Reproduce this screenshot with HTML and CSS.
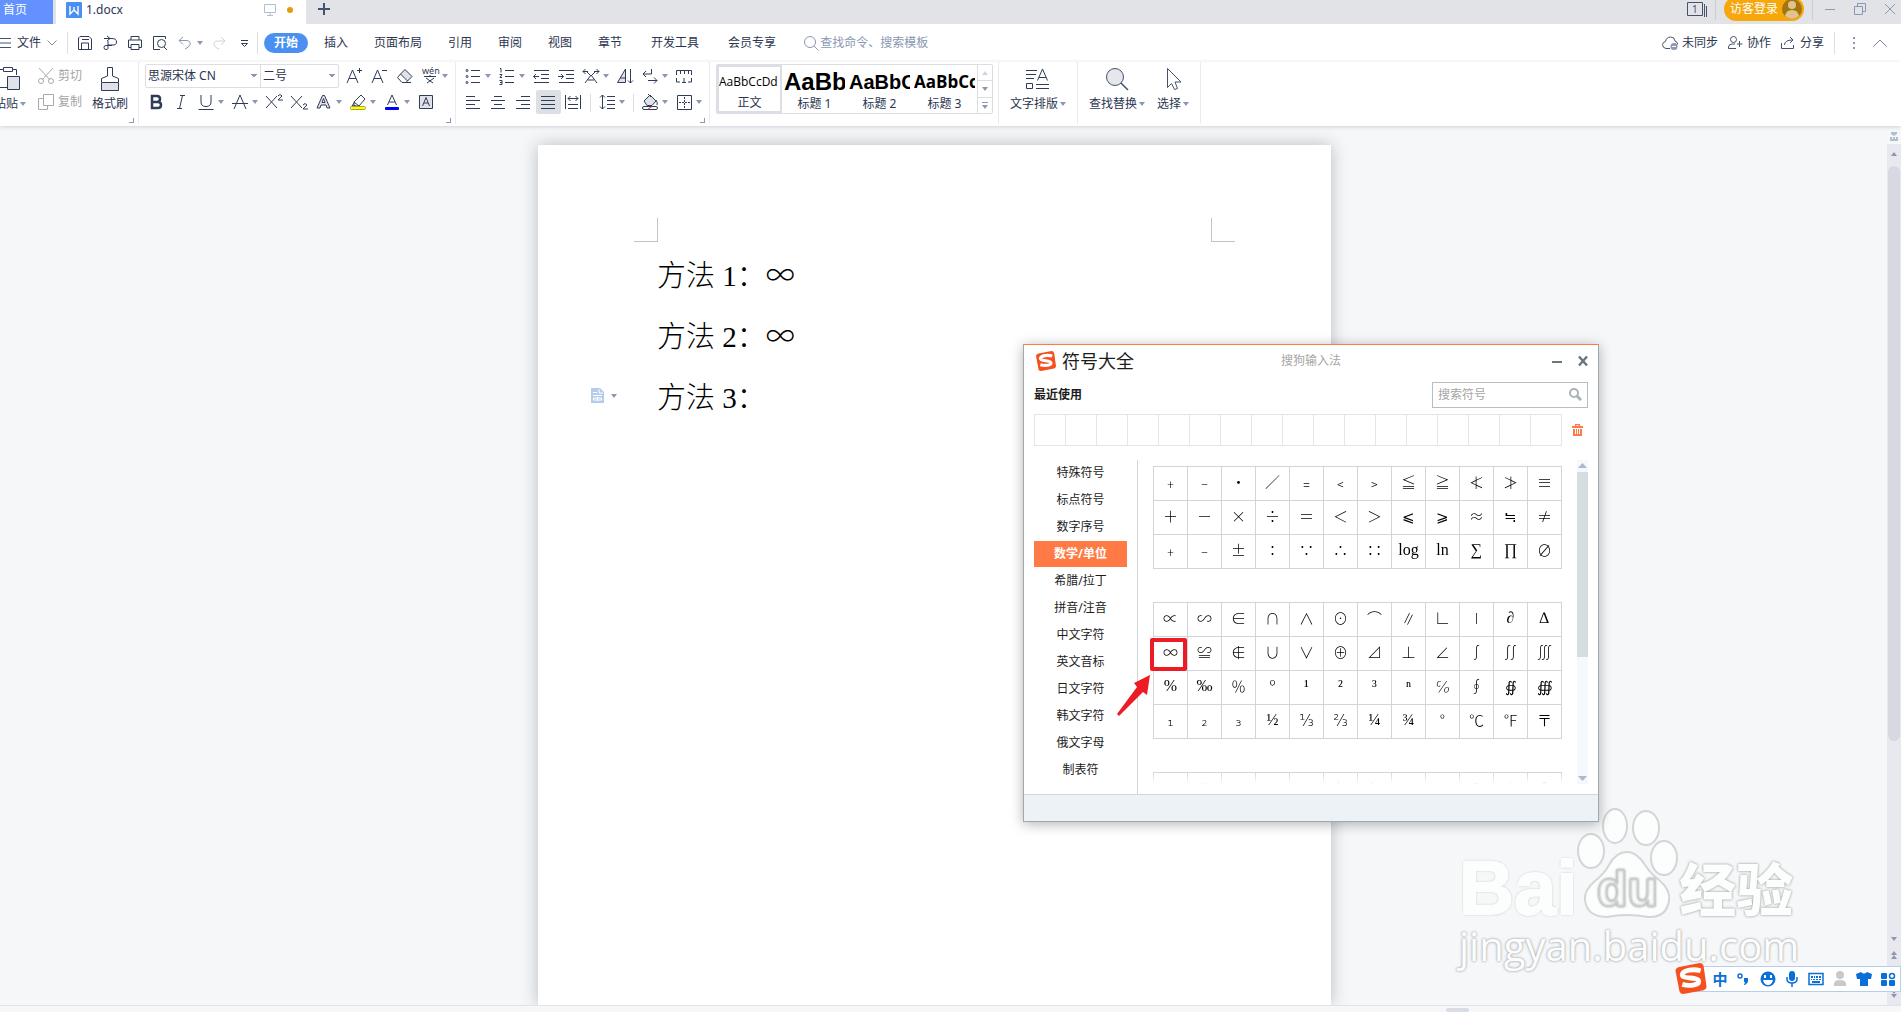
FILE: index.html
```html
<!DOCTYPE html>
<html lang="zh-CN">
<head>
  <meta charset="UTF-8">
  <meta name="viewport" content="width=device-width, initial-scale=1.0">
  <title>1.docx</title>
  <link rel="stylesheet" href="styles.css">
</head>
<body>
  <svg class="defs" width="0" height="0">
    <symbol id="caret" viewBox="0 0 6 4"><path d="M0 0h6L3 4z" fill="#8b97b3"/></symbol>
    <symbol id="sogou" viewBox="0 0 32 32">
      <path d="M4 4l21-4q3 0 4 3l3 21q0 3-3 4L8 32q-3 0-4-3L0 8q0-3 4-4z" fill="#f4511e"/>
      <path d="M26 8C19 6 8 7 7 12c0 5 17 2 17 7 0 4-10 5-17 3" fill="none" stroke="#fff" stroke-width="5"/>
    </symbol>
  </svg>

  <!-- Tabs -->
  <header class="tab-bar">
    <button class="home-tab">首页</button>
    <div class="doc-tab">
      <svg width="16" height="16" viewBox="0 0 16 16"><rect width="16" height="16" rx="1" fill="#4a90f2"/><path d="M4 4v8l4-4 4 4V4M8 8V5" fill="none" stroke="#fff" stroke-width="1.4"/></svg>
      <span>1.docx</span>
      <svg class="screen" width="12" height="12" viewBox="0 0 12 12"><path d="M.5.5h11v8H.5zM6 9v2M3 11.500h6" fill="none" stroke="#b4bccf"/></svg>
      <i class="unsaved"></i>
    </div>
    <button class="new-tab" aria-label="新建"><svg width="12" height="12" viewBox="0 0 12 12"><path d="M6 0v12M0 6h12" stroke="#45526e" stroke-width="2"/></svg></button>
    <div class="window-tools">
      <svg width="20" height="15" viewBox="0 0 20 15"><path d="M.5.5h15v13H.5zM17.500 2v13M19.500 4v11" fill="none" stroke="#45526e"/><text x="5" y="11" font-size="10" fill="#45526e">1</text></svg>
      <i class="line"></i>
      <button class="login">访客登录
        <svg width="20" height="20" viewBox="0 0 20 20"><circle cx="10" cy="10" r="10" fill="#a4750f"/><circle cx="10" cy="6" r="4" fill="#dfc48f"/><path d="M3 17q1-6 7-6t7 6q-7 6-14 0z" fill="#dfc48f"/></svg>
      </button>
      <i class="line"></i>
      <button class="win-btn" aria-label="最小化"><svg width="12" height="12" viewBox="0 0 12 12"><path d="M1 6.500h10" stroke="#8b97b3"/></svg></button>
      <button class="win-btn" aria-label="还原"><svg width="12" height="12" viewBox="0 0 12 12"><path d="M.5 3.500h8v8h-8zM3.500 3V.5h8v8H9" fill="none" stroke="#8b97b3"/></svg></button>
      <button class="win-btn" aria-label="关闭"><svg width="12" height="12" viewBox="0 0 12 12"><path d="M1 1l10 10M11 1L1 11" stroke="#8b97b3"/></svg></button>
    </div>
  </header>

  <!-- Menu -->
  <nav class="menu-bar">
    <button class="file-menu">
      <svg width="11" height="10" viewBox="0 0 11 10"><path d="M0 .5h11M0 5h11M0 9.500h11" stroke="#45526e"/></svg>
      文件
      <svg width="10" height="6" viewBox="0 0 10 6"><path d="M.5.5L5 5 9.500.5" fill="none" stroke="#8b8b8b"/></svg>
    </button>
    <i class="line"></i>
    <div class="quick">
      <button class="tool" aria-label="保存"><svg viewBox="0 0 24 24"><path d="M7 5.500h9l2.500 2.500v10.500h-13V7zM8.500 18v-6h7v6M9 8.500h7"/></svg></button>
      <button class="tool" aria-label="输出"><svg viewBox="0 0 24 24"><path d="M6 7.500h8q4.500 0 4.500 3.500t-4.500 3h-4M9 5l3 2.500L9 10M10 10v7.500q0 1-2 1t-2-2 2-2h6"/></svg></button>
      <button class="tool" aria-label="打印"><svg viewBox="0 0 24 24"><path d="M8 9V5.500h8V9M8 16.500H5.500V9h13v7.500H16M8 13.500h8v5H8z"/></svg></button>
      <button class="tool" aria-label="预览"><svg viewBox="0 0 24 24"><path d="M17.500 8V5.500h-12v13H12M16 16l3 3"/><circle cx="13.500" cy="12.500" r="4"/></svg></button>
      <button class="tool drop soft" aria-label="撤销"><svg viewBox="0 0 24 24"><path d="M10 6L6 9.500l4 4M6 9.500h7q5 0 4 4-1 3-5 4.500"/></svg><svg class="caret"><use href="#caret"/></svg></button>
      <button class="tool faint" aria-label="恢复"><svg viewBox="0 0 24 24"><path d="M14 6l4 4-4 4M18 10h-7q-5 0-4 4 1 3 5 4"/></svg></button>
      <button class="tool" aria-label="更多"><svg viewBox="0 0 24 24"><path d="M9 9.500h7M9.500 12.500l3 3 3-3z"/></svg></button>
    </div>
    <i class="line"></i>
    <a class="current" href="#">开始</a>
    <div class="links">
      <a href="#">插入</a><a href="#">页面布局</a><a href="#">引用</a><a href="#">审阅</a><a href="#">视图</a><a href="#">章节</a>
    </div>
    <div class="links more">
      <a href="#">开发工具</a><a href="#">会员专享</a>
    </div>
    <label class="command">
      <svg width="15" height="15" viewBox="0 0 15 15"><circle cx="6" cy="6" r="5.500" fill="none" stroke="#8b97b3"/><path d="M10 10l4.500 4.500" stroke="#8b97b3"/></svg>
      <input type="text" placeholder="查找命令、搜索模板" aria-label="查找命令">
    </label>
    <div class="share">
      <button><svg width="16" height="14" viewBox="0 0 16 14"><path d="M8 12.500H4q-3.500-.5-3.500-4Q1 6 3.500 5.500 4.500 1 8.500 1q4 0 4.500 4 3 1 2.500 3.500" fill="none" stroke="#45526e"/><circle cx="12" cy="10.500" r="3.500" fill="#8b97b3"/><path d="M10 10.500h4" stroke="#fff"/></svg>未同步</button>
      <button><svg width="15" height="14" viewBox="0 0 15 14"><circle cx="5.500" cy="3.500" r="3" fill="none" stroke="#45526e"/><path d="M8 12.500H.5V11q0-3 4-3H7M9 8h5.500M11.500 5v6" fill="none" stroke="#45526e"/></svg>协作</button>
      <button><svg width="15" height="14" viewBox="0 0 15 14"><path d="M.5 7v5.500h12V9M3.500 9q0-5 8-5M9 1l3 3-3 3" fill="none" stroke="#45526e"/></svg>分享</button>
      <i class="line"></i>
      <button aria-label="更多"><svg width="2" height="12" viewBox="0 0 2 12"><path d="M0 0h2v2H0zM0 5h2v2H0zM0 10h2v2H0z" fill="#8b97b3"/></svg></button>
      <button aria-label="折叠"><svg width="14" height="8" viewBox="0 0 14 8"><path d="M.5 7.500L7 1l6.500 6.500" fill="none" stroke="#76829e"/></svg></button>
    </div>
  </nav>

  <!-- Ribbon -->
  <section class="ribbon">
    <div class="group clipboard">
      <button class="big paste">
        <svg width="22" height="24" viewBox="0 0 22 24"><path d="M8 20.500H.5v-18H4M13 2.500h4.500V8M4.500.5h9v4h-9z" fill="none" stroke="#2f3b57"/><path d="M8.500 9.500h12v13h-12z" fill="#dfe2e8" stroke="#2f3b57"/></svg>
        <span>粘贴<svg class="caret"><use href="#caret"/></svg></span>
      </button>
      <div class="stack">
        <button disabled><svg width="16" height="16" viewBox="0 0 16 16"><path d="M1 0l11 12M15 0L4 12" stroke="#aaa"/><g fill="none" stroke="#aaa"><circle cx="3" cy="13" r="2.500"/><circle cx="13" cy="13" r="2.500"/></g></svg>剪切</button>
        <button disabled><svg width="16" height="16" viewBox="0 0 16 16"><path d="M5.500.5h10v11h-10zM5 4.500H.5v11h9V12" fill="none" stroke="#aaa"/></svg>复制</button>
      </div>
      <button class="big brush">
        <svg width="20" height="24" viewBox="0 0 20 24"><path d="M1.500 15.500h17v8h-17z" fill="#dfe2e8" stroke="#2f3b57"/><path d="M1.500 15v-3.500L7.500 9V.5h5V9l6 2.500V15" fill="none" stroke="#2f3b57"/></svg>
        <span>格式刷</span>
      </button>
      <i class="launcher"></i>
    </div>

    <div class="group compact">
      <div class="rows">
        <div class="row">
          <div class="font-box">
            <select class="font-name" aria-label="字体"><option>思源宋体 CN</option></select>
            <select class="font-size" aria-label="字号"><option>二号</option></select>
          </div>
          <button class="tool" aria-label="增大字号"><svg viewBox="0 0 24 24"><path d="M4 19L9.500 6 15 19M6 14.500h7M14 6.500h5M16.500 4v5"/></svg></button>
          <button class="tool" aria-label="减小字号"><svg viewBox="0 0 24 24"><path d="M4 19L9.500 6 15 19M6 14.500h7M14 6.500h5"/></svg></button>
          <button class="tool" aria-label="清除格式"><svg viewBox="0 0 24 24"><path d="M12 5.500l7 7-4.500 4.500-7-7z" fill="#dfe2e8"/><path d="M7.500 10L4.500 13.500 9 18.500h4l1.500-1.500M9 18.500h9"/></svg></button>
          <button class="tool drop" aria-label="拼音"><svg viewBox="0 0 24 24"><text x="4" y="10" font-size="9">wén</text><path d="M6 12.500h12M12 11v2M8 14l7 5M16 14l-7 5"/></svg><svg class="caret"><use href="#caret"/></svg></button>
        </div>
        <div class="row">
          <button class="tool" aria-label="加粗"><svg viewBox="0 0 24 24"><path d="M8 6h5q3 0 3 3t-3 3H8zM8 12h6q3 0 3 3t-3 3H8z" stroke-width="2.500"/></svg></button>
          <button class="tool" aria-label="斜体"><svg viewBox="0 0 24 24"><path d="M11 5.500h5M8 18.500h5M13.500 5.500l-3 13"/></svg></button>
          <button class="tool drop" aria-label="下划线"><svg viewBox="0 0 24 24"><path d="M7 5v7q0 4.500 5 4.500t5-4.500V5M4.500 19.500h15"/></svg><svg class="caret"><use href="#caret"/></svg></button>
          <button class="tool drop" aria-label="删除线"><svg viewBox="0 0 24 24"><path d="M6 19l6-14 6 14M4 13.500h16"/></svg><svg class="caret"><use href="#caret"/></svg></button>
          <button class="tool" aria-label="上标"><svg viewBox="0 0 24 24"><path d="M4 6l11 12M15 6L4 18M16 6q2-3 4 0l-4 4h5"/></svg></button>
          <button class="tool" aria-label="下标"><svg viewBox="0 0 24 24"><path d="M4 6l11 12M15 6L4 18M16 15q2-3 4 0l-4 4h5"/></svg></button>
          <button class="tool drop" aria-label="文字效果"><svg viewBox="0 0 24 24"><path d="M5 18L10.500 5.500h2L18 18h-3l-1-3H9l-1 3zM10 12.500h3l-1.500-4z" fill="#dfe2e8"/></svg><svg class="caret"><use href="#caret"/></svg></button>
          <button class="tool drop" aria-label="突出显示"><svg viewBox="0 0 24 24"><path d="M15 5l4 4-6 7H8v-4zM8 12l5 4M8 13l-2 3h4"/><rect x="4.500" y="16.500" width="15" height="3" rx="1" fill="#ff0" stroke="#a5a536"/></svg><svg class="caret"><use href="#caret"/></svg></button>
          <button class="tool drop" aria-label="字体颜色"><svg viewBox="0 0 24 24"><path d="M7.500 15L12 5l4.500 10M9 12h6"/><rect x="5" y="17" width="14" height="3" rx="1" fill="#00f" stroke="none"/></svg><svg class="caret"><use href="#caret"/></svg></button>
          <button class="tool" aria-label="字符底纹"><svg viewBox="0 0 24 24"><path d="M5.500 5.500h13v13h-13z" fill="#dfe2e8"/><path d="M8.500 16L12 7.500l3.500 8.500M10 13h4"/></svg></button>
        </div>
      </div>
      <i class="launcher"></i>
    </div>

    <div class="group compact">
      <div class="rows">
        <div class="row">
          <button class="tool drop" aria-label="项目符号"><svg viewBox="0 0 24 24"><path d="M10 6.500h9M10 12.500h9M10 18.500h9"/><g class="dots"><circle cx="6" cy="6.500" r="1"/><circle cx="6" cy="12.500" r="1"/><circle cx="6" cy="18.500" r="1"/></g></svg><svg class="caret"><use href="#caret"/></svg></button>
          <button class="tool drop" aria-label="编号"><svg viewBox="0 0 24 24"><path d="M10 6.500h9M10 12.500h9M10 18.500h9M5 4.500h1v4M4.500 10.500H7l-2 3h2M4.500 16.500H7v4H4.500M5 18.500h2"/></svg><svg class="caret"><use href="#caret"/></svg></button>
          <button class="tool" aria-label="减少缩进"><svg viewBox="0 0 24 24"><path d="M5 6.500h15M12 10.500h8M12 14.500h8M5 18.500h15M10 12.500H4.500M7 10l-2.500 2.500L7 15"/></svg></button>
          <button class="tool" aria-label="增加缩进"><svg viewBox="0 0 24 24"><path d="M5 6.500h15M12 10.500h8M12 14.500h8M5 18.500h15M4 12.500h5.500M7 10l2.500 2.500L7 15"/></svg></button>
          <button class="tool drop" aria-label="中文版式"><svg viewBox="0 0 24 24"><path d="M6 19l6-8 6 8M9 16h6M4 7.500h5M15 7.500h5M6.500 5L4 7.500 6.500 10M17.500 5L20 7.500 17.500 10M8 8l4 4 4-4"/></svg><svg class="caret"><use href="#caret"/></svg></button>
          <button class="tool" aria-label="排序"><svg viewBox="0 0 24 24"><path d="M4.500 18.500L12.500 5v13.500zM7 14h5" fill="#dfe2e8"/><path d="M17.500 5v14M15 16.500l2.500 2.500 2.500-2.500"/></svg></button>
          <button class="tool drop" aria-label="显示标记"><svg viewBox="0 0 24 24"><path d="M13.500 5v5H5M8 7l-3 3 3 3M10 16.500h9M16 13.500l3 3-3 3"/></svg><svg class="caret"><use href="#caret"/></svg></button>
          <button class="tool" aria-label="制表位"><svg viewBox="0 0 24 24"><path d="M4.500 11V6.500h15V11M8.500 7v3M12.500 7v3M16.500 7v3M4.500 14v4H8M19.500 14v4H16M12 14v5M10 18.500h4"/></svg></button>
        </div>
        <div class="row">
          <button class="tool" aria-label="左对齐"><svg viewBox="0 0 24 24"><path d="M5 6.500h9M5 10.500h14M5 14.500h9M5 18.500h14"/></svg></button>
          <button class="tool" aria-label="居中"><svg viewBox="0 0 24 24"><path d="M8 6.500h8M5 10.500h14M8 14.500h8M5 18.500h14"/></svg></button>
          <button class="tool" aria-label="右对齐"><svg viewBox="0 0 24 24"><path d="M10 6.500h9M5 10.500h14M10 14.500h9M5 18.500h14"/></svg></button>
          <button class="tool pressed" aria-label="两端对齐"><svg viewBox="0 0 24 24"><path d="M5 6.500h14M5 10.500h14M5 14.500h14M5 18.500h14"/></svg></button>
          <button class="tool" aria-label="分散对齐"><svg viewBox="0 0 24 24"><path d="M4.500 5v14M19.500 5v14M7 14.500h10M7 18.500h10M7 8.500h10M9.500 6L7 8.500 9.500 11M14.500 6L17 8.500 14.500 11"/></svg></button>
          <i class="line short"></i>
          <button class="tool drop" aria-label="行距"><svg viewBox="0 0 24 24"><path d="M12 6.500h8M12 10.500h8M12 14.500h8M12 18.500h8M7.500 5v14M5 7.500L7.500 5 10 7.500M5 16.500L7.500 19l2.500-2.500"/></svg><svg class="caret"><use href="#caret"/></svg></button>
          <i class="line short"></i>
          <button class="tool drop" aria-label="底纹颜色"><svg viewBox="0 0 24 24"><path d="M6 11l6-6 6 6-4 4.500H9z" fill="#dfe2e8"/><path d="M10 4l3 3M18 10q2 3 1 5"/><rect x="4.500" y="16.500" width="15" height="3" rx="1.500"/><path d="M10 19l4-2.500" stroke="#e04040"/></svg><svg class="caret"><use href="#caret"/></svg></button>
          <button class="tool drop" aria-label="边框"><svg viewBox="0 0 24 24"><path d="M5.500 5.500h14v14h-14z"/><path d="M12.500 7v11M7 12.500h11" stroke-dasharray="2 1"/></svg><svg class="caret"><use href="#caret"/></svg></button>
        </div>
      </div>
      <i class="launcher"></i>
    </div>

    <div class="group">
      <div class="gallery">
        <button class="style selected"><b class="body">AaBbCcDd</b><span>正文</span></button>
        <button class="style"><b class="h1">AaBb</b><span>标题 1</span></button>
        <button class="style"><b class="h2">AaBbC</b><span>标题 2</span></button>
        <button class="style"><b class="h3">AaBbCc</b><span>标题 3</span></button>
        <div class="spin">
          <button class="end" aria-label="上"><svg class="caret up"><use href="#caret"/></svg></button>
          <button aria-label="下"><svg class="caret"><use href="#caret"/></svg></button>
          <button class="expand" aria-label="展开"><svg class="caret"><use href="#caret"/></svg></button>
        </div>
      </div>
    </div>

    <div class="group">
      <button class="big">
        <svg width="24" height="24" viewBox="0 0 24 24"><path d="M0 3.500h11M0 7.500h10M0 11.500h8M.5 16.500h6v5h-6zM10 17.500h13M10 21.500h13M11.500 13.500L16.500 2l5 11.500M13 10.500h7" fill="none" stroke="#2f3b57"/></svg>
        <span>文字排版<svg class="caret"><use href="#caret"/></svg></span>
      </button>
    </div>
    <div class="group">
      <button class="big">
        <svg width="24" height="24" viewBox="0 0 24 24"><circle cx="10" cy="10" r="8.500" fill="#e5e7eb" stroke="#45526e"/><path d="M16 16l7 7" stroke="#45526e" stroke-width="1.500"/></svg>
        <span>查找替换<svg class="caret"><use href="#caret"/></svg></span>
      </button>
      <button class="big">
        <svg width="24" height="24" viewBox="0 0 24 24"><path d="M6.500 1.500v19l4-4 3 6 3-1-2.500-6.500h6z" fill="none" stroke="#45526e"/></svg>
        <span>选择<svg class="caret"><use href="#caret"/></svg></span>
      </button>
    </div>
  </section>

  <!-- Document -->
  <main class="workspace">
    <div class="canvas">
      <article class="page">
        <i class="mark left"></i>
        <i class="mark right"></i>
        <p>方法<span class="num"> 1</span>：∞</p>
        <p>方法<span class="num"> 2</span>：∞</p>
        <p>方法<span class="num"> 3</span>：
          <button class="para-menu" aria-label="段落">
            <svg width="13" height="15" viewBox="0 0 13 15"><path d="M0 0h9l4 4v11H0z" fill="#b5cbea"/><path d="M2 4.500h4M2 7.500h9M2.500 10h8v2h-8zM6.500 9v4M8 1v4h4" fill="none" stroke="#fff"/></svg>
            <svg class="caret"><use href="#caret"/></svg>
          </button>
        </p>
      </article>
    </div>
    <div class="scroll">
      <svg class="split" width="10" height="9" viewBox="0 0 10 9"><path d="M2 0h6v2L5 4 2 2zM1 5h2v2h1V5h2v2h1V5h2v4H1z" fill="#b4bccf"/></svg>
      <div class="track">
        <svg class="caret up"><use href="#caret"/></svg>
        <i class="thumb"></i>
        <svg class="caret"><use href="#caret"/></svg>
        <svg width="6" height="8" viewBox="0 0 6 8"><path d="M0 4l3-4 3 4zM0 8l3-4 3 4z" fill="#8b97b3"/></svg>
        <svg width="6" height="8" viewBox="0 0 6 8"><path d="M0 0h6L3 4zM0 4h6L3 8z" fill="#8b97b3"/></svg>
      </div>
    </div>
  </main>
  <footer class="bottom-bar"><i></i></footer>

  <!-- Symbol window -->
  <section class="symbols">
    <div class="sym-title">
      <svg width="20" height="22"><use href="#sogou"/></svg>
      <h2>符号大全</h2>
      <span>搜狗输入法</span>
      <button aria-label="最小化"><svg width="10" height="12" viewBox="0 0 10 12"><path d="M0 7h10" stroke="#6b7780" stroke-width="2"/></svg></button>
      <button aria-label="关闭"><svg width="10" height="12" viewBox="0 0 10 12"><path d="M1 1.500l8 9M9 1.500l-8 9" stroke="#6b7780" stroke-width="2.500"/></svg></button>
    </div>
    <div class="sym-recent">
      <strong>最近使用</strong>
      <label class="sym-search">
        <input type="text" placeholder="搜索符号" aria-label="搜索符号">
        <svg width="13" height="13" viewBox="0 0 13 13"><circle cx="5" cy="5" r="4" fill="none" stroke="#a9b4ba" stroke-width="2"/><path d="M8 8l4 4" stroke="#a9b4ba" stroke-width="3"/></svg>
      </label>
    </div>
    <div class="sym-history">
      <div class="slots" id="slots"></div>
      <button aria-label="清空"><svg width="11" height="12" viewBox="0 0 11 12"><path d="M3 0h5v2h3v2H0V2h3zM4.500 1v1h2V1zM1 5h9v7H1z" fill="#ff7a45" fill-rule="evenodd"/><path d="M3.500 5v5M5.500 5v5M7.500 5v5" stroke="#fff"/></svg></button>
    </div>
    <div class="sym-body">
      <ul class="cats" id="cats"></ul>
      <div class="sheet" id="sheet"></div>
      <div class="sym-scroll">
        <svg width="11" height="12" viewBox="0 0 11 12"><path d="M1 8l4.500-5L10 8z" fill="#adb9c8"/></svg>
        <i></i>
        <svg width="11" height="12" viewBox="0 0 11 12"><path d="M1 4h9L5.500 9z" fill="#adb9c8"/></svg>
      </div>
    </div>
    <div class="sym-foot"></div>
    <i class="red-box"></i>
    <svg class="red-arrow" width="34" height="41" viewBox="0 0 34 41"><path d="M0 39L20 12l-3-4L33 0l-3 20-4-3L2 41z" fill="#ed1c24"/></svg>
  </section>

  <!-- Watermark -->
  <div class="watermark">
    <div class="brand">
      <span class="bai">Bai</span>
      <svg width="102" height="112" viewBox="0 0 102 112">
        <g fill="#fcfdfd" stroke="#d3d5d7" stroke-width="2">
          <ellipse cx="14" cy="43" rx="13" ry="17"/><ellipse cx="38" cy="18" rx="12" ry="17"/><ellipse cx="69" cy="20" rx="13" ry="17"/><ellipse cx="87" cy="50" rx="13" ry="17"/>
          <path d="M50 44q10 0 18 13 6 9 14 15 12 10 10 21-3 17-21 16-10-2-21-2t-20 2Q10 109 8 92q-1-10 10-19 9-7 14-16 7-13 18-13z"/>
        </g>
        <text class="du" x="20" y="98">du</text>
      </svg>
      <span class="jy">经验</span>
    </div>
    <div class="site">jingyan.baidu.com</div>
  </div>

  <!-- Input method bar -->
  <div class="ime">
    <svg class="ime-logo" width="32" height="31"><use href="#sogou"/></svg>
    <button>中</button>
    <button aria-label="标点"><svg viewBox="0 0 16 16"><circle cx="4" cy="5" r="2" fill="none" stroke="#0a6fd8" stroke-width="1.500"/><path d="M8 7h4v4l-3 3H8l1-3H8z"/></svg></button>
    <button aria-label="表情"><svg viewBox="0 0 16 16"><circle cx="8" cy="8" r="7.500"/><path d="M4 4h2v3H4zM10 4h2v3h-2zM3 9h10q-1 5-5 5T3 9z" fill="#fff"/></svg></button>
    <button aria-label="语音"><svg viewBox="0 0 16 16"><rect x="5" y="0" width="6" height="10" rx="3"/><path d="M3 6v2q0 4 5 4t5-4V6M8 12v4" fill="none" stroke="#0a6fd8" stroke-width="1.500"/></svg></button>
    <button aria-label="键盘"><svg viewBox="0 0 16 16"><path d="M1 2.500h14v11H1z" fill="none" stroke="#0a6fd8" stroke-width="1.500"/><path d="M3 5h2v2H3zM6 5h1v2H6zM8 5h2v2H8zM11 5h2v2h-2zM3 8h1v1H3zM5 8h2v1H5zM8 8h2v1H8zM11 8h2v1h-2zM4 10h8v2H4z"/></svg></button>
    <button class="off" aria-label="用户"><svg viewBox="0 0 16 16"><circle cx="8" cy="4" r="4"/><path d="M2 15v-2q0-4 6-4t6 4v2z"/></svg></button>
    <button aria-label="皮肤"><svg viewBox="0 0 16 16"><path d="M5 1q3 3 6 0l5 2-1 5h-3v7H4V8H1L0 3z"/></svg></button>
    <button aria-label="工具箱"><svg viewBox="0 0 16 16"><rect x="1" y="2" width="6" height="6" rx="1"/><rect x="1" y="9" width="6" height="6" rx="1"/><rect x="9" y="9" width="6" height="6" rx="1"/><circle cx="12" cy="5" r="2.500" fill="none" stroke="#0a6fd8" stroke-width="1.500"/></svg></button>
  </div>

  <script>
    const cats = ["特殊符号", "标点符号", "数字序号", "数学/单位", "希腊/拉丁", "拼音/注音",
      "中文字符", "英文音标", "日文字符", "韩文字符", "俄文字母", "制表符"];
    const groups = [
      ["﹢", "﹣", "•", "∕", "﹦", "﹤", "﹥", "≦", "≧", "≮", "≯", "≡",
       "＋", "－", "×", "÷", "＝", "＜", "＞", "⩽", "⩾", "≈", "≒", "≠",
       "﹢", "﹣", "±", "∶", "∵", "∴", "∷", "log", "ln", "∑", "∏", "∅"],
      ["∝", "∽", "∈", "∩", "∧", "⊙", "⌒", "∥", "∟", "∣", "∂", "∆",
       "∞", "≌", "∉", "∪", "∨", "⊕", "⊿", "⊥", "∠", "∫", "∬", "∭",
       "%", "‰", "％", "º", "¹", "²", "³", "ⁿ", "℅", "∮", "∯", "∰",
       "₁", "₂", "₃", "½", "⅓", "⅔", "¼", "¾", "°", "℃", "℉", "〒"],
      ["", "ˉ", "", "", "", "k", "k", "¥", "t", "O", "i", "θ"]
    ];
    const serif = ["log", "ln", "∑", "∏", "∂", "∆", "%", "‰", "¹", "²", "³", "ⁿ", "½", "¼", "¾"];

    const slots = document.getElementById("slots");
    for (let i = 0; i < 17; i++) {
      slots.appendChild(document.createElement("span"));
    }

    cats.forEach(name => {
      const li = document.createElement("li");
      const button = document.createElement("button");
      button.textContent = name;
      if (name === "数学/单位") button.className = "active";
      li.appendChild(button);
      document.getElementById("cats").appendChild(li);
    });

    groups.forEach(list => {
      const grid = document.createElement("div");
      grid.className = "sym-grid";
      list.forEach(s => {
        const button = document.createElement("button");
        button.textContent = s;
        if (serif.includes(s)) button.className = "serif";
        grid.appendChild(button);
      });
      document.getElementById("sheet").appendChild(grid);
    });
  </script>
</body>
</html>
```
FILE: styles.css
```css
* {
  box-sizing: border-box;
}

body {
  margin: 0;
  height: 100vh;
  display: flex;
  flex-direction: column;
  position: relative;
  overflow: hidden;
  font-family: "Noto Sans", "Noto Sans CJK SC", sans-serif;
  font-size: 12px;
  line-height: 16px;
  color: #2b3550;
  background: #f5f7f9;
}

button, input, select {
  font: inherit;
  color: inherit;
  border: none;
  background: none;
  padding: 0;
  margin: 0;
  outline: none;
  white-space: nowrap;
}

a {
  color: inherit;
  text-decoration: none;
}

svg {
  display: block;
  flex: none;
}

.defs {
  position: absolute;
}

.caret {
  width: 6px;
  height: 4px;
}

.caret.up {
  transform: rotate(180deg);
}

.line {
  width: 1px;
  height: 22px;
  background: #dcdee3;
}

/* Tabs */
.tab-bar {
  display: flex;
  flex: none;
  height: 24px;
  background: #e1e3e7;
}

.home-tab {
  width: 53px;
  padding: 0 26px 4px 3px;
  margin-right: 3px;
  color: #fff;
  background: #6391ff;
}

.doc-tab {
  display: flex;
  align-items: center;
  width: 250px;
  padding: 0 13px 4px 10px;
  background: #fff;
}

.doc-tab span {
  margin-left: 4px;
}

.screen {
  margin-left: auto;
}

.unsaved {
  width: 6px;
  height: 6px;
  margin-left: 11px;
  border-radius: 50%;
  background: #e89a0c;
}

.new-tab {
  padding: 0 12px 6px;
}

.window-tools {
  display: flex;
  align-items: center;
  gap: 8px;
  margin-left: auto;
  padding: 0 2px 6px 0;
}

.window-tools .line {
  background: #cbcdd2;
}

.login {
  display: flex;
  align-items: center;
  gap: 4px;
  height: 24px;
  padding: 0 2px 0 6px;
  border-radius: 12px;
  color: #fff;
  background: #f5a70c;
}

.win-btn {
  padding: 0 3px;
}

.win-btn + .win-btn {
  margin-left: 4px;
}

/* Menu */
.menu-bar {
  display: flex;
  align-items: center;
  flex: none;
  height: 38px;
  background: #fff;
}

.file-menu {
  display: flex;
  align-items: center;
  gap: 6px;
  width: 67px;
}

.quick {
  display: flex;
  width: 189px;
  padding-left: 5px;
}

.tool {
  display: flex;
  align-items: center;
  flex: none;
  width: 25px;
  height: 24px;
}

.tool.drop {
  width: 34px;
}

.tool svg:first-child {
  width: 24px;
  height: 24px;
  fill: none;
  stroke: #2f3b57;
}

.tool text {
  fill: #2f3b57;
  stroke: none;
}

.tool.soft svg:first-child {
  stroke: #8b97b3;
}

.tool.faint svg:first-child {
  stroke: #d0d3da;
}

.tool.pressed {
  border-radius: 2px;
  background: #dce0e5;
}

.current {
  width: 44px;
  margin: 0 16px 0 6px;
  line-height: 20px;
  border-radius: 10px;
  text-align: center;
  font-weight: bold;
  color: #fff;
  background: #4a90f2;
}

.links {
  display: flex;
  gap: 26px;
}

.links.more {
  gap: 29px;
  margin-left: 29px;
}

.command {
  display: flex;
  align-items: center;
  gap: 1px;
  margin-left: 28px;
}

.command input {
  width: 140px;
}

.command input::placeholder {
  color: #8b97b3;
  opacity: 1;
}

.share {
  display: flex;
  align-items: center;
  gap: 10px;
  margin-left: auto;
  padding-right: 14px;
}

.share button {
  display: flex;
  align-items: center;
  gap: 4px;
}

.share .line + button {
  padding: 0 8px;
}

/* Ribbon */
.ribbon {
  display: flex;
  flex: none;
  height: 64px;
  background: #fff;
  box-shadow: 0 1px 4px #cfd2d6;
  z-index: 1;
}

.group {
  display: flex;
  position: relative;
  height: 62px;
  padding: 2px 5px 0;
  border-right: 1px solid #eaebee;
}

.group.compact {
  padding-right: 3px;
}

.clipboard {
  width: 139px;
  padding-left: 0;
}

.big {
  display: flex;
  flex-direction: column;
  align-items: center;
  gap: 5px;
  padding: 3px 6px 0;
}

.big span {
  display: flex;
  align-items: center;
  gap: 2px;
}

.big.paste {
  padding: 3px 0 0;
  margin-left: -6px;
}

.big.brush {
  padding: 3px 0 0;
  margin-left: 10px;
}

.stack {
  display: flex;
  flex-direction: column;
  gap: 10px;
  padding: 4px 0 0 12px;
}

.stack button {
  display: flex;
  align-items: center;
  gap: 4px;
  color: #a4a4a4;
}

.launcher {
  position: absolute;
  right: 4px;
  bottom: 1px;
  width: 5px;
  height: 5px;
  border: solid #8b97b3;
  border-width: 0 1px 1px 0;
}

.rows {
  display: flex;
  flex-direction: column;
  gap: 2px;
}

.row {
  display: flex;
}

.short {
  margin: 4px;
  height: 18px;
}

.font-box {
  display: flex;
  width: 194px;
  margin: 0 4px 0 1px;
  border: 1px solid #dcdee3;
  border-radius: 2px;
}

.font-box select {
  appearance: none;
  padding: 0 2px;
  background:
    linear-gradient(to bottom left, #8b97b3 50%, transparent 50%) right 6px center / 3px 4px no-repeat,
    linear-gradient(to bottom right, #8b97b3 50%, transparent 50%) right 3px center / 3px 4px no-repeat;
}

.font-name {
  width: 114px;
}

.font-box .font-size {
  flex: 1;
  border-left: 1px solid #dcdee3;
}

.gallery {
  display: flex;
  height: 50px;
  margin-left: 1px;
  border: 1px solid #dcdee3;
  border-radius: 2px;
}

.style {
  display: flex;
  flex-direction: column;
  align-items: center;
  width: 65px;
  overflow: hidden;
}

.style b {
  width: 61px;
  height: 31px;
  line-height: 34px;
  overflow: hidden;
  text-align: left;
  color: #000;
}

.style.selected {
  border: 2px solid #dcdee3;
}

.style .body {
  font-family: "Open Sans", sans-serif;
  font-weight: normal;
  line-height: 30px;
}

.style.selected b {
  height: 29px;
}

.style .h1 {
  font-family: "Liberation Sans", sans-serif;
  font-size: 24px;
}

.style .h2 {
  font-family: "Liberation Sans", sans-serif;
  font-size: 20px;
}

.style .h3 {
  font-family: "Open Sans", sans-serif;
  font-size: 17px;
}

.spin {
  display: flex;
  flex-direction: column;
  width: 15px;
  border-left: 1px solid #dcdee3;
}

.spin button {
  display: flex;
  align-items: center;
  justify-content: center;
  flex: 1;
}

.spin button + button {
  border-top: 1px solid #dcdee3;
}

.spin .end {
  opacity: 0.4;
}

.spin .expand svg {
  height: 7px;
  padding-top: 2px;
  border-top: 1px solid #8b97b3;
}

/* Document */
.workspace {
  display: flex;
  flex: 1;
  min-height: 0;
}

.canvas {
  display: flex;
  justify-content: center;
  flex: 1;
  overflow: hidden;
  padding: 19px 18px 0 0;
}

.page {
  position: relative;
  width: 793px;
  padding: 98px 119px 0;
  background: #fff;
  box-shadow: 0 0 16px #b9bbbe;
}

.page p {
  position: relative;
  height: 61px;
  margin: 0;
  font-family: "Noto Sans CJK SC", serif;
  font-size: 29px;
  font-weight: 300;
  line-height: 60px;
  color: #000;
}

.num {
  font-family: "Liberation Serif", serif;
  line-height: 1;
}

.mark {
  position: absolute;
  top: 73px;
  width: 24px;
  height: 24px;
  border-bottom: 1px solid #c4c4c4;
}

.mark.left {
  left: 96px;
  border-right: 1px solid #c4c4c4;
}

.mark.right {
  right: 96px;
  border-left: 1px solid #c4c4c4;
}

.para-menu {
  display: flex;
  align-items: center;
  gap: 7px;
  position: absolute;
  left: -66px;
  top: 23px;
}

.scroll {
  display: flex;
  flex-direction: column;
  width: 14px;
}

.split {
  margin: 6px 2px 3px;
}

.track {
  display: flex;
  flex: 1;
  flex-direction: column;
  align-items: center;
  gap: 10px;
  padding: 8px 0 7px;
  background: #e8e9ee;
}

.thumb {
  width: 12px;
  height: 68%;
  margin-bottom: auto;
  border-radius: 6px;
  background: #d6d9e1;
}

.track svg:last-child {
  margin-top: 21px;
}

.bottom-bar {
  flex: none;
  height: 7px;
  padding: 2px 432px 0 0;
  border-top: 1px solid #e1e3e7;
}

.bottom-bar i {
  display: block;
  width: 23px;
  height: 4px;
  margin-left: auto;
  border-radius: 2px;
  background: #d9dde3;
}

/* Symbol window */
.symbols {
  position: absolute;
  right: 302px;
  top: 344px;
  width: 576px;
  z-index: 2;
  border: 1px solid #9fa8af;
  border-top-color: #ff7a45;
  background: #fff;
  box-shadow: 0 2px 12px rgba(0, 0, 0, 0.3);
  color: #1c1c1c;
}

.sym-title {
  display: flex;
  align-items: center;
  gap: 16px;
  height: 32px;
  padding: 0 10px 0 12px;
}

.sym-title h2 {
  margin: 0 auto 0 -10px;
  font-size: 18px;
  font-weight: normal;
}

.sym-title span {
  margin-right: 195px;
  color: #a5a5a5;
}

.sym-recent {
  display: flex;
  align-items: center;
  justify-content: space-between;
  height: 37px;
  padding: 0 10px 2px;
}

.sym-search {
  display: flex;
  align-items: center;
  width: 156px;
  height: 26px;
  padding: 0 5px;
  border: 1px solid #b6bec3;
}

.sym-search input {
  flex: 1;
  min-width: 0;
}

.sym-search input::placeholder {
  color: #a5a5a5;
  opacity: 1;
}

.sym-history {
  display: flex;
  align-items: center;
  gap: 10px;
  padding: 0 10px;
}

.slots {
  display: grid;
  grid-template-columns: repeat(17, 31px);
  height: 32px;
  border: solid #e2e6ea;
  border-width: 1px 0 1px 1px;
}

.slots span {
  border-right: 1px solid #e2e6ea;
}

.sym-body {
  display: flex;
  height: 334px;
  padding: 0 10px;
  margin-top: 14px;
}

.cats {
  width: 104px;
  margin: 0;
  padding: 0 10px 0 0;
  list-style: none;
  border-right: 1px solid #d0d6da;
}

.cats button {
  width: 100%;
  height: 26px;
  margin-bottom: 1px;
}

.cats .active {
  font-weight: bold;
  color: #fff;
  background: #ff7a45;
}

.sheet {
  width: 409px;
  height: 324px;
  margin: 0 15px;
  padding-top: 6px;
  overflow: hidden;
  mask-image: linear-gradient(#000 312px, transparent);
}

.sym-grid {
  display: grid;
  grid-template-columns: repeat(12, 34px);
  grid-auto-rows: 34px;
  width: 409px;
  margin-bottom: 33px;
  border: solid #cfd5da;
  border-width: 1px 0 0 1px;
}

.sym-grid button {
  font-family: "Noto Sans CJK SC", "DejaVu Sans", sans-serif;
  font-size: 15px;
  font-weight: 300;
  color: #000;
  padding-bottom: 3px;
  border: solid #cfd5da;
  border-width: 0 1px 1px 0;
}

.sym-grid .serif {
  font-family: "Liberation Serif", "DejaVu Serif", serif;
  font-size: 16px;
}

.sym-scroll {
  display: flex;
  flex-direction: column;
  width: 11px;
  height: 324px;
  background: #f5f8fc;
}

.sym-scroll i {
  height: 185px;
  margin-bottom: auto;
  background: #d5dde0;
}

.sym-foot {
  height: 27px;
  border-top: 1px solid #d0d6da;
  background: #ecf2f5;
}

.red-box {
  position: absolute;
  left: 126px;
  top: 293px;
  width: 37px;
  height: 33px;
  border: 4px solid #ed1c24;
  border-radius: 2px;
}

.red-arrow {
  position: absolute;
  left: 93px;
  top: 330px;
}

/* Watermark */
.watermark {
  position: absolute;
  right: 100px;
  bottom: 40px;
  width: 342px;
  z-index: 1;
  white-space: nowrap;
  color: #fcfdfd;
  text-shadow: 0 0 2px #aaa, 0 0 3px #b4b4b4;
}

.brand {
  display: flex;
  align-items: flex-end;
}

.bai {
  font: bold 76px/64px "Liberation Sans", sans-serif;
  -webkit-text-stroke: 2px #fcfdfd;
}

.jy {
  font: 900 57px/68px "Noto Sans CJK SC", sans-serif;
}

.du {
  font: bold 50px "Liberation Sans", sans-serif;
  fill: #fcfdfd;
  stroke: #cfd1d3;
}

.site {
  font: 40px/52px "Open Sans", sans-serif;
}

/* Input method bar */
.ime {
  display: flex;
  align-items: center;
  gap: 8px;
  position: absolute;
  right: 0;
  bottom: 20px;
  height: 26px;
  padding: 0 4px 0 28px;
  z-index: 3;
  border: 1px solid #b7cdea;
  background: #fff;
}

.ime-logo {
  position: absolute;
  left: -9px;
  top: -4px;
}

.ime button {
  width: 16px;
  font-size: 15px;
  font-weight: bold;
  color: #0a6fd8;
  fill: #0a6fd8;
}

.ime .off {
  fill: #c9c9c9;
}
```
